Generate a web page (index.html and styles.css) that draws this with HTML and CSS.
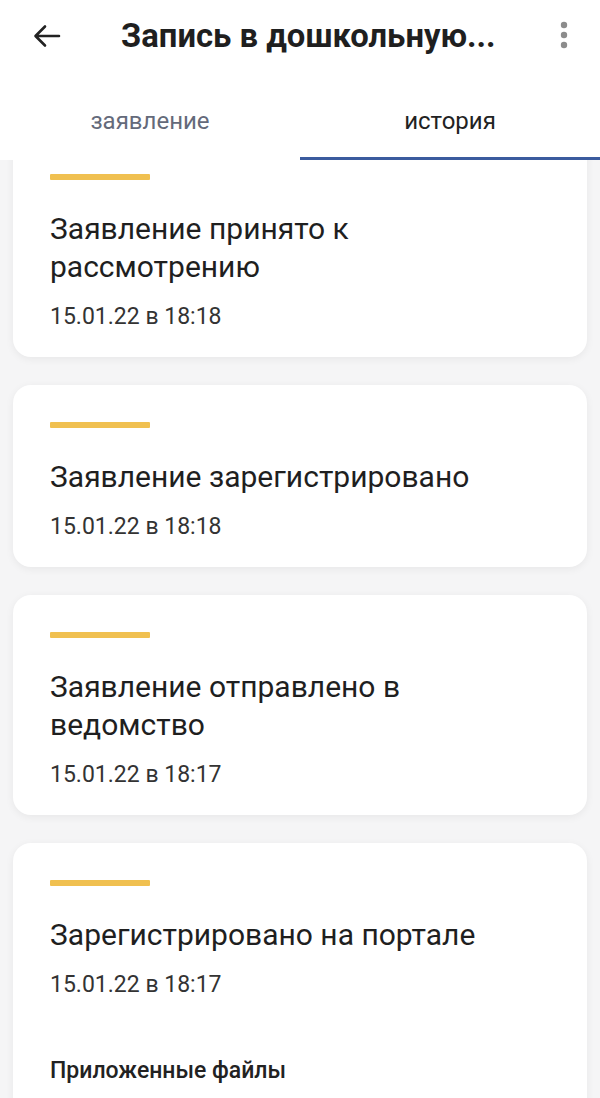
FILE: index.html
```html
<!DOCTYPE html>
<html lang="ru">
<head>
<meta charset="utf-8">
<link rel="stylesheet" href="styles.css">
</head>
<body>
<div class="screen">
  <header class="appbar">
    <div class="toolbar">
      <span class="back">
        <svg width="32" height="32" viewBox="0 0 32 32"><path d="M28 16H5M14 6.5L4.5 16L14 25.5" fill="none" stroke="#222" stroke-width="2.6" stroke-linecap="round" stroke-linejoin="round"/></svg>
      </span>
      <h1 class="title">Запись в дошкольную...</h1>
      <span class="more">
        <svg width="12" height="32" viewBox="0 0 12 32"><circle cx="6" cy="6" r="3.2" fill="#8c8c8c"/><circle cx="6" cy="16" r="3.2" fill="#8c8c8c"/><circle cx="6" cy="26" r="3.2" fill="#8c8c8c"/></svg>
      </span>
    </div>
    <nav class="tabs">
      <div class="tab">заявление</div>
      <div class="tab active">история</div>
    </nav>
  </header>
  <main class="content">
    <div class="list">
      <section class="card">
        <div class="bar"></div>
        <h2 class="card-title">Заявление принято к рассмотрению</h2>
        <div class="date">15.01.22 в 18:18</div>
      </section>
      <section class="card">
        <div class="bar"></div>
        <h2 class="card-title">Заявление зарегистрировано</h2>
        <div class="date">15.01.22 в 18:18</div>
      </section>
      <section class="card">
        <div class="bar"></div>
        <h2 class="card-title">Заявление отправлено в ведомство</h2>
        <div class="date">15.01.22 в 18:17</div>
      </section>
      <section class="card">
        <div class="bar"></div>
        <h2 class="card-title">Зарегистрировано на портале</h2>
        <div class="date">15.01.22 в 18:17</div>
        <div class="files">Приложенные файлы</div>
      </section>
    </div>
  </main>
</div>
</body>
</html>
```
FILE: styles.css
```css
* { box-sizing: border-box; }
html, body { margin: 0; padding: 0; }
body {
  font-family: Roboto, "Noto Sans", "Liberation Sans", sans-serif;
  background: #f5f5f6;
  color: #222;
}
.screen {
  width: 600px;
  height: 1098px;
  display: flex;
  flex-direction: column;
  overflow: hidden;
}
.appbar {
  background: #fff;
  flex: 0 0 auto;
  position: relative;
  z-index: 2;
}
.toolbar {
  height: 72px;
  display: flex;
  align-items: center;
  padding: 0 0 0 31px;
}
.back { display: flex; width: 32px; height: 32px; }
.title {
  margin: 0 0 0 58px;
  font-size: 32.8px;
  font-weight: 700;
  color: #1f1f1f;
  flex: 1;
  white-space: nowrap;
}
.more { display: flex; width: 12px; height: 32px; margin-right: 30px; margin-top: -2px; }
.tabs {
  display: flex;
  height: 88px;
}
.tab {
  flex: 1;
  display: flex;
  align-items: center;
  justify-content: center;
  font-size: 24px;
  color: #646a7a;
  padding-top: 12px;
  border-bottom: 3px solid transparent;
}
.tab.active {
  color: #222;
  border-bottom-color: #3b5b9e;
}
.content {
  flex: 1;
  overflow: hidden;
}
.list {
  margin-top: -23px;
  padding: 0 13px;
  display: flex;
  flex-direction: column;
  gap: 28px;
}
.card {
  background: #fff;
  border-radius: 18px;
  box-shadow: 0 2px 8px rgba(0,0,0,0.06);
  padding: 37px 37px 26px;
}
.bar {
  width: 100px;
  height: 6px;
  background: #f0c050;
  border-radius: 1px;
}
.card-title {
  margin: 30px 0 0;
  font-size: 30px;
  line-height: 38px;
  font-weight: 400;
  color: #1f1f1f;
}
.date {
  margin-top: 17px;
  font-size: 23px;
  line-height: 28px;
  color: #333;
}
.files {
  margin-top: 58px;
  font-size: 23px;
  line-height: 28px;
  font-weight: 500;
  color: #222;
  padding-bottom: 40px;
}
```
